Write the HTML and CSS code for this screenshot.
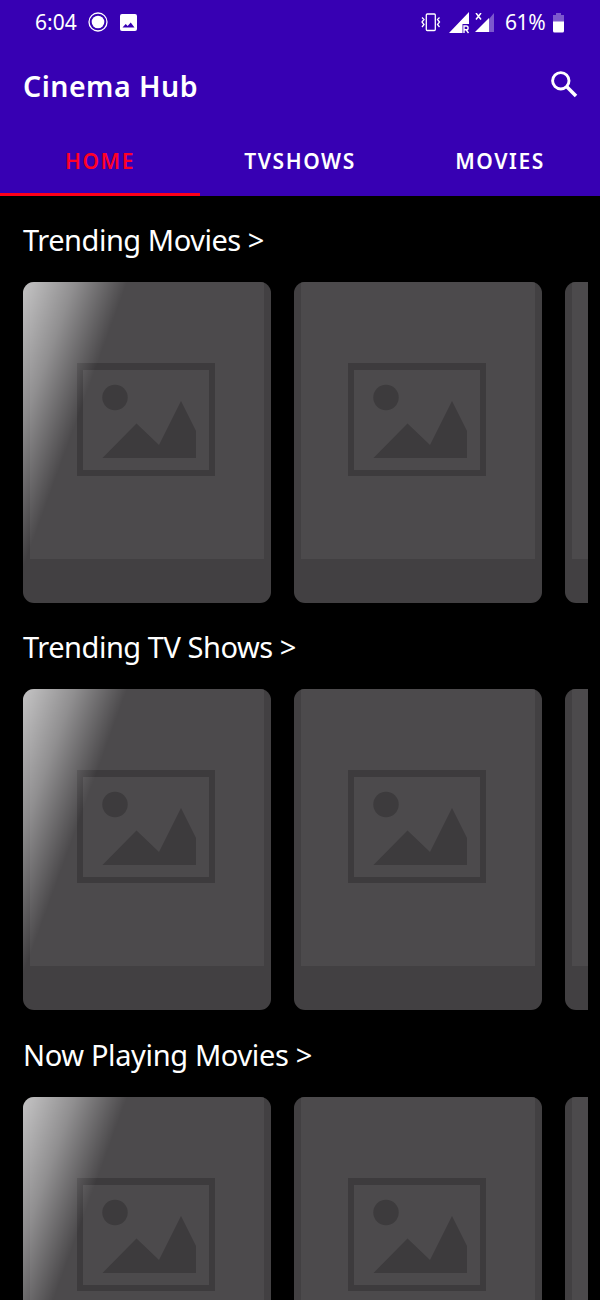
FILE: index.html
```html
<!DOCTYPE html>
<html lang="en">
<head>
<meta charset="utf-8">
<title>Cinema Hub</title>
<link rel="stylesheet" href="styles.css">
</head>
<body>
<svg width="0" height="0" class="defs">
  <symbol id="placeholder" viewBox="0 0 138 113">
    <path fill-rule="evenodd" d="M0 0h138v113H0zM6 7v100h126V7z"/>
    <circle cx="38" cy="34.500" r="12.700"/>
    <path d="M25.500 95 59.500 60.500 82 82 104 38 119 68v27z"/>
  </symbol>
</svg>
<header class="header">
  <div class="status">
    <span class="time">6:04</span>
    <svg class="record" width="20" height="20" viewBox="0 0 20 20"><circle cx="10" cy="10" r="9" fill="none" stroke="#fff" stroke-width="1.300"/><circle cx="10" cy="10" r="6.300" fill="#fff"/></svg>
    <svg class="photo" width="17" height="17" viewBox="0 0 17 17"><path fill="#fff" fill-rule="evenodd" d="M2 0h13q2 0 2 2v13q0 2-2 2H2q-2 0-2-2V2q0-2 2-2zM2.500 13.500h12l-3.800-5-3 3.500-2-2z"/></svg>
    <svg class="vibrate" width="20" height="19" viewBox="0 0 20 19" fill="none" stroke="#fff" stroke-width="1.300"><rect x="5.300" y="1" width="9" height="16.500" rx="1"/><path d="M1 4.500l2 2-2 2.500 2 2.500-2 2.500M18.500 4.500l-2 2 2 2.500-2 2.500 2 2.500"/></svg>
    <svg class="signal" width="21" height="22" viewBox="0 0 21 22"><path fill="#fff" d="M0 21 20 0v12h-6.500v9z"/><path fill="none" stroke="#fff" stroke-width="1.400" d="M15 21v-7h2.200a1.900 1.900 0 0 1 0 3.800H15m2.200 0L19.500 21"/></svg>
    <svg class="signal-x" width="20" height="20" viewBox="0 0 20 20"><path fill="#7c58cd" d="M14 6l5-6v19h-5z"/><path fill="#fff" d="M0 19 14 5v14z"/><path stroke="#fff" stroke-width="1.500" d="M1 0l5 6.500M6 0 1 6.500"/></svg>
    <span class="percent">61%</span>
    <svg class="battery" width="11" height="20" viewBox="0 0 11 20"><path fill="#7c58cd" d="M3 0h5v2h3v7H0V2h3z"/><path fill="#fff" d="M0 8.500h11V18q0 1.500-1.500 1.500h-8Q0 19.500 0 18z"/></svg>
  </div>
  <div class="appbar">
    <h1 class="brand">Cinema Hub</h1>
    <svg class="search" width="27" height="27" viewBox="0 0 27 27" fill="none" stroke="#fff"><circle cx="9.800" cy="9.800" r="8.200" stroke-width="2.900"/><path stroke-width="3.500" d="M15.800 15.800 25 25"/></svg>
  </div>
  <nav class="tabs">
    <a class="tab active">HOME</a>
    <a class="tab">TVSHOWS</a>
    <a class="tab">MOVIES</a>
  </nav>
</header>
<main class="content">
  <section class="section">
    <h2 class="title">Trending Movies &gt;</h2>
    <div class="row">
      <div class="card shimmer"><div class="poster"><svg class="glyph"><use href="#placeholder"/></svg></div></div>
      <div class="card"><div class="poster"><svg class="glyph"><use href="#placeholder"/></svg></div></div>
      <div class="card"><div class="poster"></div></div>
    </div>
  </section>
  <section class="section">
    <h2 class="title">Trending TV Shows &gt;</h2>
    <div class="row">
      <div class="card shimmer"><div class="poster"><svg class="glyph"><use href="#placeholder"/></svg></div></div>
      <div class="card"><div class="poster"><svg class="glyph"><use href="#placeholder"/></svg></div></div>
      <div class="card"><div class="poster"></div></div>
    </div>
  </section>
  <section class="section">
    <h2 class="title playing">Now Playing Movies &gt;</h2>
    <div class="row">
      <div class="card shimmer"><div class="poster"><svg class="glyph"><use href="#placeholder"/></svg></div></div>
      <div class="card"><div class="poster"><svg class="glyph"><use href="#placeholder"/></svg></div></div>
      <div class="card"><div class="poster"></div></div>
    </div>
  </section>
</main>
</body>
</html>
```
FILE: styles.css
```css
* { box-sizing: border-box; }
body {
  margin: 0;
  height: 1300px;
  overflow: hidden;
  background: #000;
  color: #fff;
  font-family: "Noto Sans", sans-serif;
}
.defs { display: none; }
.header { height: 196px; background: #3700b3; }
.status {
  display: flex;
  align-items: center;
  height: 46px;
  padding: 0 36px 0 35px;
  font-size: 21px;
}
.time, .percent { line-height: 45px; height: 46px; white-space: nowrap; }
.time { width: 53px; }
.record { margin-top: -2px; }
.photo { margin: -2px 0 0 12px; }
.vibrate { margin: -1px 0 0 auto; }
.signal { margin: -1px 0 0 8px; }
.signal-x { margin: -1px 10px 0 5px; }
.percent { width: 48px; letter-spacing: -0.4px; }
.battery { margin-top: -1px; }
.appbar {
  display: flex;
  align-items: center;
  justify-content: space-between;
  height: 80px;
  padding: 0 22px 0 23px;
}
.brand {
  margin: 0;
  font-size: 28.500px;
  font-weight: 650;
  line-height: 80px;
  letter-spacing: 0.5px;
}
.search { margin-top: -3px; }
.tabs { display: grid; grid-template-columns: repeat(3, 1fr); height: 70px; }
.tab {
  height: 70px;
  border-bottom: 3px solid transparent;
  font-size: 21px;
  font-weight: 600;
  line-height: 70px;
  letter-spacing: 1.6px;
  text-align: center;
}
.active { color: #ff0028; border-color: #ff0018; }
.content { height: 1104px; overflow: hidden; }
.section { height: 407.3px; }
.title {
  display: flex;
  align-items: center;
  height: 86px;
  margin: 0;
  padding: 0 0 0 23px;
  font-size: 29px;
  font-weight: 400;
  letter-spacing: -0.46px;
  white-space: nowrap;
}
.playing { padding-top: 1px; letter-spacing: -0.36px; }
.row {
  display: flex;
  gap: 23px;
  margin: 0 12px 0 23px;
  overflow: hidden;
}
.section:last-child .row { height: 204px; }
.card {
  position: relative;
  flex: 0 0 248px;
  height: 321px;
  padding: 0 7px;
  border-radius: 11px;
  overflow: hidden;
  background: #424042;
}
.poster { height: 277px; padding: 81px 0 0 47px; background: #4c4a4c; }
.glyph { display: block; width: 138px; height: 113px; fill: #3d3b3d; }
.shimmer::after {
  content: "";
  position: absolute;
  inset: 0;
  background: linear-gradient(110deg, rgba(255,255,255,.68) 0, rgba(255,255,255,.38) 49px, rgba(255,255,255,0) 98px);
}
```
